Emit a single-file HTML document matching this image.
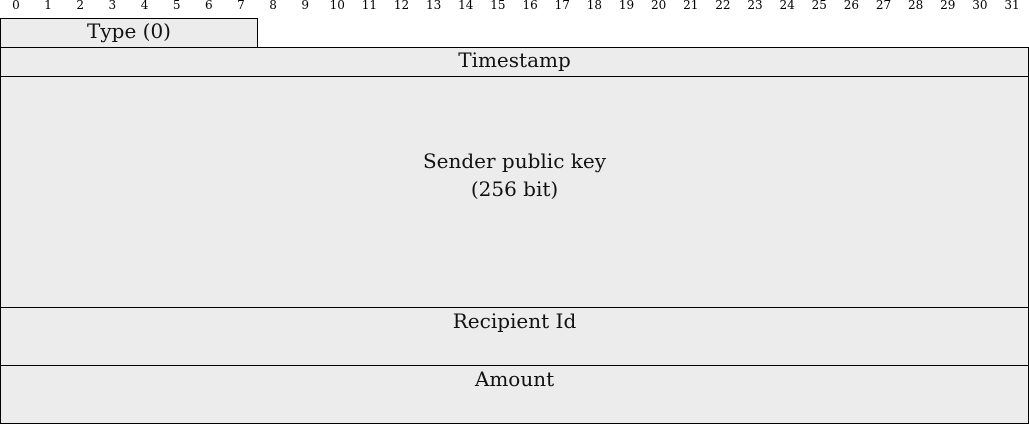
<!DOCTYPE html><html><head><style>
body{margin:0;width:1029px;height:424px;background:#fff;position:relative;overflow:hidden;font-family:"DejaVu Serif",serif}
.n{position:absolute;top:0;font-size:12px;width:30px;text-align:center;line-height:12px;margin-left:-15px}
.b{position:absolute;background:#ececec;border:1px solid #000;box-sizing:border-box;text-align:center;font-size:20px;color:#111}
</style></head><body>
<div id="nums"></div>
<script>
var s='';for(var i=0;i<32;i++){s+='<div class="n" style="left:'+(16+i*32.13)+'px;top:-1px">'+i+'</div>'}document.getElementById('nums').innerHTML=s;
</script>
<div class="b" style="left:0;top:18px;width:258px;height:30px;line-height:25px">Type (0)</div>
<div class="b" style="left:0;top:47px;width:1029px;height:30px;line-height:25px">Timestamp</div>
<div class="b" style="left:0;top:76px;width:1029px;height:232px;padding-top:70px;line-height:28px">Sender public key<br>(256 bit)</div>
<div class="b" style="left:0;top:307px;width:1029px;height:59px;line-height:26px">Recipient Id</div>
<div class="b" style="left:0;top:365px;width:1029px;height:59px;line-height:26px">Amount</div>
</body></html>
